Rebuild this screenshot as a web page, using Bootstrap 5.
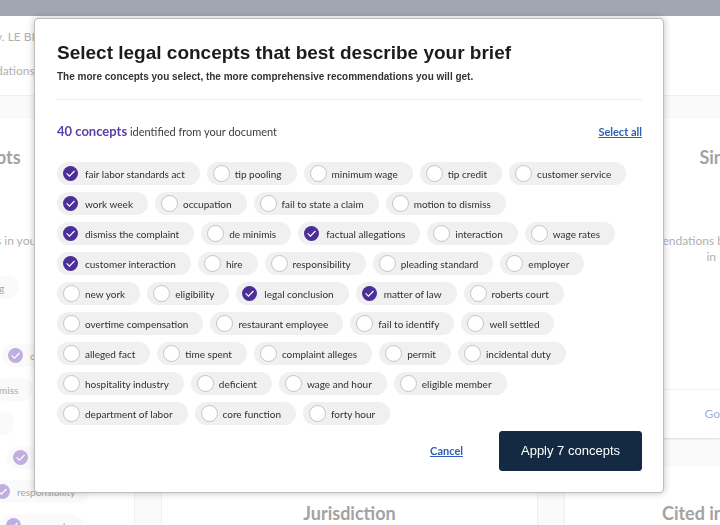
<!DOCTYPE html>
<html lang="en">
<head>
<meta charset="utf-8">
<meta name="viewport" content="width=device-width, initial-scale=1">
<title>Select legal concepts</title>
<link href="https://cdn.jsdelivr.net/npm/bootstrap@5.3.0/dist/css/bootstrap.min.css" rel="stylesheet">
<style>
  body { font-family: Lato, "Liberation Sans", sans-serif; background: #fafafa; color: #b0b0b0; font-size: 12px; line-height: 16px; height: 100vh; overflow: hidden; }
  .top-strip { height: 16px; background: #a0a7b3; }
  .case-head { height: 80px; padding-top: 12px; background: #fff; border-bottom: 1px solid #f0f0f0; line-height: 18px; }
  .board { display: grid; grid-template-columns: 134px 1fr 155px; column-gap: 28px; padding-top: 22px; align-items: start; }
  .board-col { display: flex; flex-direction: column; gap: 28px; min-width: 0; }
  .panel { background: #fff; box-shadow: 0 1px 2px rgba(0,0,0,.12); overflow: hidden; white-space: nowrap; }
  .panel-tall { height: 460px; }
  .panel-main { height: 320px; }
  .panel-title { font-size: 18px; line-height: 24px; font-weight: 700; color: #a3a3a3; padding-top: 27px; margin: 0; }
  .panel-low { padding-top: 35px; }
  .panel-text { padding-top: 64px; line-height: 16px; }
  .panel-foot { padding: 16px 0; border-top: 1px solid #f2f2f2; }
  .panel-link { color: #9db5e0; text-decoration: none; }
  .bleed-start { margin-left: -4px; }
  .bleed-end { margin-right: -4px; }
  .ghost-list { display: flex; flex-direction: column; align-items: flex-start; gap: 11px; padding-top: 27px; }
  .concept { display: inline-flex; align-items: center; height: 23px; padding: 0 15px 0 6px; border-radius: 12px; background: #f0f0f0; color: #303030; font-size: 10px; line-height: 16px; white-space: nowrap; cursor: pointer; }
  .concept .form-check-input { flex: none; width: 17px; height: 17px; margin: 0 5px 0 0; border: 1px solid #c4c4c4; border-radius: 50%; background-color: #fff; }
  .concept .form-check-input:checked { width: 15px; height: 15px; margin: 0 7px 1px 0; border: 0; background-color: #4b2e97; background-size: 15px 15px;
    background-image: url("data:image/svg+xml,%3Csvg xmlns='http://www.w3.org/2000/svg' viewBox='0 0 15 15'%3E%3Cpath d='M3.6 7.4 6.4 10.1 11.5 5' fill='none' stroke='%23fff' stroke-width='1.2'/%3E%3C/svg%3E"); }
  .ghost-list .concept { background: #fafafa; color: #a8a8a8; }
  .ghost-list .form-check-input:checked { background-color: #c0aee0; opacity: 1; }
  .shift-a { margin-left: 2px; }
  .shift-b { margin-left: 7px; }
  .shift-c { margin-left: -11px; }
  .shift-d { margin-left: -7px; }
  .concepts-modal { padding-right: 22px; overflow: hidden; }
  .concepts-modal .modal-dialog { max-width: 630px; margin: 18px auto 0; }
  .concepts-modal .modal-content { border: 1px solid #bdbdbd; border-radius: 4px; padding: 23px 21px 21px 22px; box-shadow: 0 0 7px rgba(0,0,0,.25); color: #3c3c3c; }
  .dialog-title { font: 700 19px/22px "Liberation Sans", Arial, sans-serif; color: #1c1c1c; }
  .dialog-note { font: 700 10px/14px "Liberation Sans", Arial, sans-serif; color: #333; margin-top: 6px; padding-bottom: 15px; border-bottom: 1px solid #ececec; }
  .found { padding: 23px 0 22px; font-size: 11px; line-height: 16px; }
  .found strong { color: #5b3fa8; font-size: 13px; }
  .text-action { font-size: 11px; font-weight: 700; color: #2f5fb3; text-decoration: underline; background: none; border: 0; padding: 0; }
  .chip-wrap { display: flex; flex-wrap: wrap; gap: 7px; }
  .dialog-actions { display: flex; justify-content: flex-end; align-items: center; gap: 36px; padding-top: 6px; }
  .apply { font: 400 13px/20px "Liberation Sans", Arial, sans-serif; color: #fff; background: #142a43; border: 1px solid #142a43; border-radius: 3px; padding: 9px 21px; }
</style>
</head>
<body>
<div class="top-strip"></div>
<header class="case-head text-nowrap"><div class="bleed-start">v. LE BIE</div><div class="mt-3 bleed-start">dations</div></header>
<main class="board">
  <section class="board-col">
    <div class="panel panel-tall">
      <h2 class="panel-title bleed-start">pts</h2>
      <p class="panel-text bleed-start mb-0">s in you</p>
      <div class="ghost-list">
        <span class="concept shift-d">g</span>
        <span class="concept invisible">-</span>
        <label class="concept shift-a"><input class="form-check-input" type="checkbox" checked>occupation</label>
        <span class="concept shift-d">miss</span>
        <span class="concept shift-d"></span>
        <label class="concept shift-b"><input class="form-check-input" type="checkbox" checked>work week</label>
        <label class="concept shift-c"><input class="form-check-input" type="checkbox" checked>responsibility</label>
        <label class="concept"><input class="form-check-input" type="checkbox" checked>new york</label>
      </div>
    </div>
  </section>
  <section class="board-col">
    <div class="panel panel-main"></div>
    <div class="panel panel-main text-center"><h2 class="panel-title panel-low">Jurisdiction</h2></div>
  </section>
  <section class="board-col">
    <div class="panel panel-main d-flex flex-column">
      <h2 class="panel-title text-end bleed-end">Sin</h2>
      <div class="panel-text text-end bleed-end">endations b<div class="me-2">in</div></div>
      <div class="panel-foot mt-auto text-end"><a class="panel-link" href="#">Go</a></div>
    </div>
    <div class="panel panel-main"><h2 class="panel-title panel-low text-end bleed-end">Cited in</h2></div>
  </section>
</main>

<div class="modal concepts-modal d-block" role="dialog" aria-modal="true" aria-labelledby="dlgTitle">
  <div class="modal-dialog">
    <form class="modal-content">
      <h1 class="dialog-title mb-0" id="dlgTitle">Select legal concepts that best describe your brief</h1>
      <p class="dialog-note mb-0">The more concepts you select, the more comprehensive recommendations you will get.</p>
      <div class="found d-flex justify-content-between align-items-center">
        <div><strong>40 concepts</strong> identified from your document</div>
        <a class="text-action" href="#">Select all</a>
      </div>
      <div class="chip-wrap">
        <label class="concept"><input class="form-check-input" type="checkbox" checked>fair labor standards act</label>
        <label class="concept"><input class="form-check-input" type="checkbox">tip pooling</label>
        <label class="concept"><input class="form-check-input" type="checkbox">minimum wage</label>
        <label class="concept"><input class="form-check-input" type="checkbox">tip credit</label>
        <label class="concept"><input class="form-check-input" type="checkbox">customer service</label>
        <label class="concept"><input class="form-check-input" type="checkbox" checked>work week</label>
        <label class="concept"><input class="form-check-input" type="checkbox">occupation</label>
        <label class="concept"><input class="form-check-input" type="checkbox">fail to state a claim</label>
        <label class="concept"><input class="form-check-input" type="checkbox">motion to dismiss</label>
        <label class="concept"><input class="form-check-input" type="checkbox" checked>dismiss the complaint</label>
        <label class="concept"><input class="form-check-input" type="checkbox">de minimis</label>
        <label class="concept"><input class="form-check-input" type="checkbox" checked>factual allegations</label>
        <label class="concept"><input class="form-check-input" type="checkbox">interaction</label>
        <label class="concept"><input class="form-check-input" type="checkbox">wage rates</label>
        <label class="concept"><input class="form-check-input" type="checkbox" checked>customer interaction</label>
        <label class="concept"><input class="form-check-input" type="checkbox">hire</label>
        <label class="concept"><input class="form-check-input" type="checkbox">responsibility</label>
        <label class="concept"><input class="form-check-input" type="checkbox">pleading standard</label>
        <label class="concept"><input class="form-check-input" type="checkbox">employer</label>
        <label class="concept"><input class="form-check-input" type="checkbox">new york</label>
        <label class="concept"><input class="form-check-input" type="checkbox">eligibility</label>
        <label class="concept"><input class="form-check-input" type="checkbox" checked>legal conclusion</label>
        <label class="concept"><input class="form-check-input" type="checkbox" checked>matter of law</label>
        <label class="concept"><input class="form-check-input" type="checkbox">roberts court</label>
        <label class="concept"><input class="form-check-input" type="checkbox">overtime compensation</label>
        <label class="concept"><input class="form-check-input" type="checkbox">restaurant employee</label>
        <label class="concept"><input class="form-check-input" type="checkbox">fail to identify</label>
        <label class="concept"><input class="form-check-input" type="checkbox">well settled</label>
        <label class="concept"><input class="form-check-input" type="checkbox">alleged fact</label>
        <label class="concept"><input class="form-check-input" type="checkbox">time spent</label>
        <label class="concept"><input class="form-check-input" type="checkbox">complaint alleges</label>
        <label class="concept"><input class="form-check-input" type="checkbox">permit</label>
        <label class="concept"><input class="form-check-input" type="checkbox">incidental duty</label>
        <label class="concept"><input class="form-check-input" type="checkbox">hospitality industry</label>
        <label class="concept"><input class="form-check-input" type="checkbox">deficient</label>
        <label class="concept"><input class="form-check-input" type="checkbox">wage and hour</label>
        <label class="concept"><input class="form-check-input" type="checkbox">eligible member</label>
        <label class="concept"><input class="form-check-input" type="checkbox">department of labor</label>
        <label class="concept"><input class="form-check-input" type="checkbox">core function</label>
        <label class="concept"><input class="form-check-input" type="checkbox">forty hour</label>
      </div>
      <div class="dialog-actions">
        <button class="text-action" type="button">Cancel</button>
        <button class="apply" type="submit">Apply 7 concepts</button>
      </div>
    </form>
  </div>
</div>
<script src="https://cdn.jsdelivr.net/npm/bootstrap@5.3.0/dist/js/bootstrap.bundle.min.js"></script>
</body>
</html>
